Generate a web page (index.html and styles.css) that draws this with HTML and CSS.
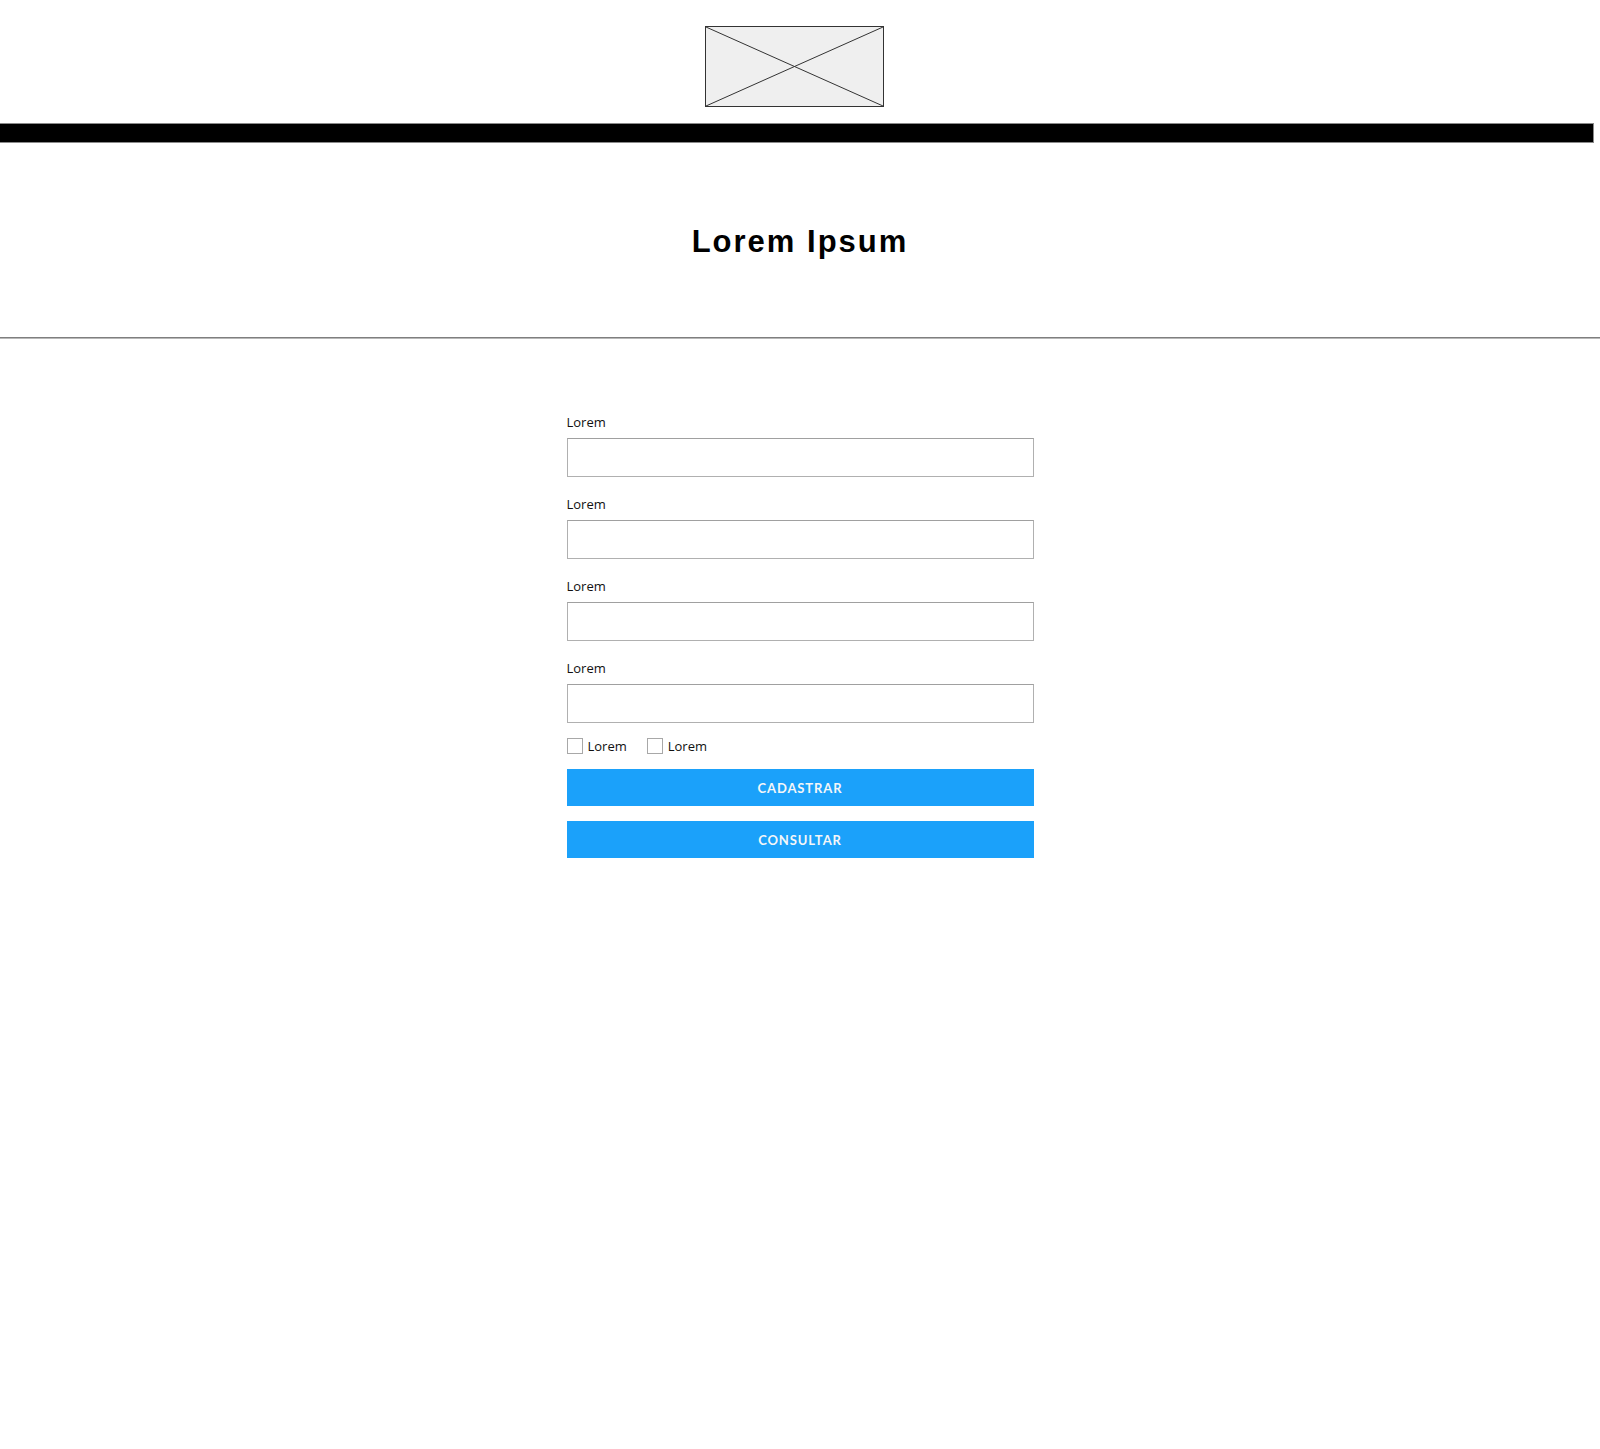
FILE: index.html
```html
<!DOCTYPE html>
<html lang="pt">
<head>
<meta charset="utf-8">
<title>Lorem Ipsum</title>
<link rel="stylesheet" href="styles.css">
</head>
<body>
<header class="header">
  <div class="logo-row">
    <div class="logo">
      <svg width="179" height="81" viewBox="0 0 179 81" xmlns="http://www.w3.org/2000/svg">
        <rect x="0.5" y="0.5" width="178" height="80" fill="#efefef" stroke="#333" stroke-width="1"/>
        <line x1="1" y1="1" x2="178" y2="80" stroke="#333" stroke-width="1"/>
        <line x1="1" y1="80" x2="178" y2="1" stroke="#333" stroke-width="1"/>
      </svg>
    </div>
  </div>
  <div class="bar"></div>
</header>
<section class="title-section">
  <h1 class="title">Lorem Ipsum</h1>
</section>
<hr class="divider">
<main class="form-wrap">
  <form class="form">
    <div class="field">
      <label class="label">Lorem</label>
      <input class="input" type="text">
    </div>
    <div class="field">
      <label class="label">Lorem</label>
      <input class="input" type="text">
    </div>
    <div class="field">
      <label class="label">Lorem</label>
      <input class="input" type="text">
    </div>
    <div class="field field-last">
      <label class="label">Lorem</label>
      <input class="input" type="text">
    </div>
    <div class="checks">
      <label class="check"><input class="checkbox" type="checkbox"><span>Lorem</span></label>
      <label class="check"><input class="checkbox" type="checkbox"><span>Lorem</span></label>
    </div>
    <button class="btn" type="button">CADASTRAR</button>
    <button class="btn" type="button">CONSULTAR</button>
  </form>
</main>
</body>
</html>
```
FILE: styles.css
```css
html, body {
  margin: 0;
  padding: 0;
  background: #ffffff;
}
body {
  font-family: "Open Sans", "Lato", sans-serif;
  color: #111;
}
.header {
  padding-top: 26px;
}
.logo-row {
  display: flex;
  justify-content: center;
  padding-right: 11px;
}
.logo svg {
  display: block;
}
.bar {
  margin-top: 16px;
  height: 18px;
  width: calc(100% - 7px);
  background: #000;
  border: 1px solid #8a8a8a;
  border-left: 0;
}
.title-section {
  padding: 80px 0 77px;
}
.title {
  margin: 0;
  text-align: center;
  font-family: "Liberation Sans", Arial, sans-serif;
  font-weight: 700;
  font-size: 31px;
  line-height: 37px;
  letter-spacing: 2px;
  color: #000;
}
.divider {
  margin: 0;
  border: 0;
  border-top: 1px solid #7f7f7f;
  border-bottom: 1px solid #b8b8b8;
  height: 0;
}
.form-wrap {
  padding-top: 75px;
}
.form {
  width: 467px;
  margin: 0 auto;
  display: flex;
  flex-direction: column;
}
.field {
  display: flex;
  flex-direction: column;
  margin-bottom: 19px;
}
.field-last {
  margin-bottom: 15px;
}
.label {
  font-size: 13px;
  line-height: 16px;
  margin-bottom: 8px;
  color: #111;
}
.input {
  box-sizing: border-box;
  height: 39px;
  width: 100%;
  margin: 0;
  border: 1px solid #b0b0b0;
  border-top-color: #a0a0a0;
  background: #fff;
  padding: 0 10px;
  font: inherit;
  outline: none;
}
.checks {
  display: flex;
  gap: 20px;
  height: 16px;
  margin-bottom: 15px;
}
.check {
  display: flex;
  align-items: center;
  gap: 5px;
  font-size: 13px;
  line-height: 16px;
  color: #111;
}
.checkbox {
  appearance: none;
  -webkit-appearance: none;
  box-sizing: border-box;
  width: 16px;
  height: 16px;
  margin: 0;
  border: 1px solid #a8a8a8;
  background: #fff;
}
.btn {
  height: 37px;
  width: 100%;
  margin: 0 0 15px;
  border: 0;
  background: #1ba1fa;
  color: #f4f6f8;
  font-family: "Lato", "Open Sans", sans-serif;
  font-weight: 700;
  font-size: 13px;
  letter-spacing: 0.9px;
  cursor: pointer;
}
```
